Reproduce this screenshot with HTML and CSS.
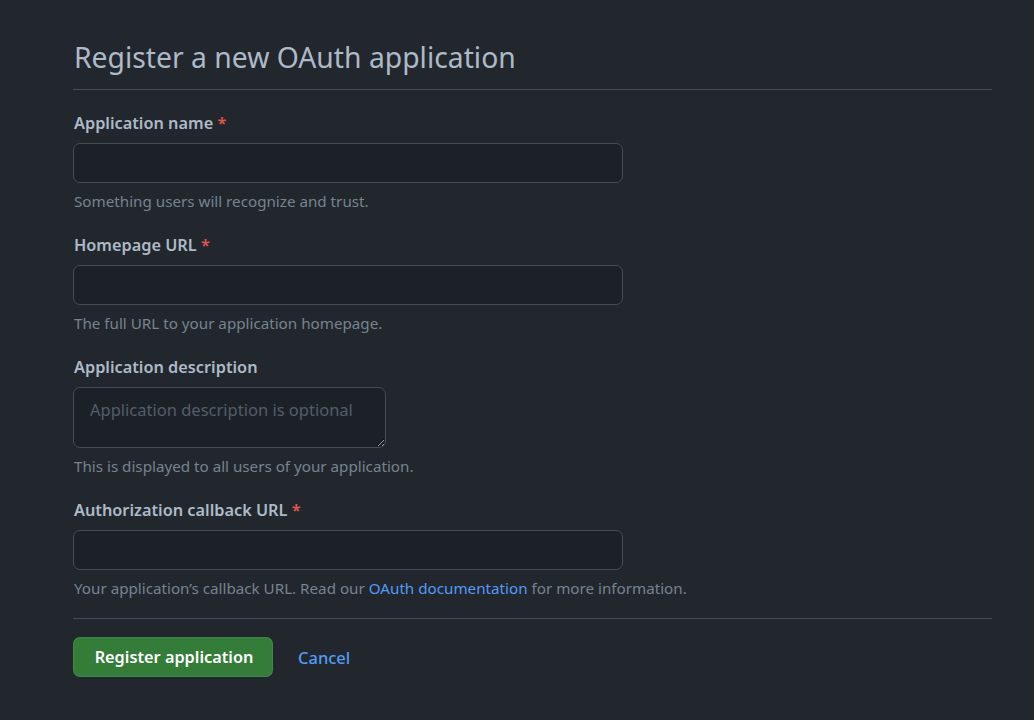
FILE: index.html
```html
<!DOCTYPE html>
<html lang="en">
<head>
<meta charset="utf-8">
<title>Register a new OAuth application</title>
<link rel="stylesheet" href="styles.css">
</head>
<body>
<main class="page">
  <div class="subhead">
    <h2 class="subhead-heading">Register a new OAuth application</h2>
  </div>
  <form class="form">
    <div class="form-group">
      <label class="label">Application name <span class="req">*</span></label>
      <input class="input" type="text">
      <p class="note">Something users will recognize and trust.</p>
    </div>
    <div class="form-group">
      <label class="label">Homepage URL <span class="req">*</span></label>
      <input class="input" type="text">
      <p class="note">The full URL to your application homepage.</p>
    </div>
    <div class="form-group">
      <label class="label">Application description</label>
      <textarea class="textarea" placeholder="Application description is optional"></textarea>
      <p class="note">This is displayed to all users of your application.</p>
    </div>
    <div class="form-group form-group-last">
      <label class="label">Authorization callback URL <span class="req">*</span></label>
      <input class="input" type="text">
      <p class="note">Your application’s callback URL. Read our <a class="link" href="#">OAuth documentation</a> for more information.</p>
    </div>
    <hr class="divider">
    <div class="actions">
      <button class="btn-primary" type="button">Register application</button>
      <a class="cancel" href="#">Cancel</a>
    </div>
  </form>
</main>
</body>
</html>
```

FILE: styles.css
```css
html, body {
  margin: 0;
  padding: 0;
  background: #22272e;
}
body {
  font-family: "Noto Sans", "Open Sans", sans-serif;
  color: #adbac7;
}
.page {
  width: 919px;
  padding: 0 0 0 73px;
}
.subhead {
  padding-top: 37px;
  padding-bottom: 12px;
  border-bottom: 1px solid #444c56;
}
.subhead-heading {
  margin: 0;
  font-size: 28.3px;
  font-weight: 400;
  line-height: 40px;
  color: #adbac7;
  padding-left: 1px;
}
.form {
  padding-top: 21px;
}
.form-group {
  margin-bottom: 22px;
}
.form-group-last {
  margin-bottom: 20px;
}
.label {
  display: block;
  font-size: 16.3px;
  font-weight: 600;
  line-height: 24px;
  margin-bottom: 8px;
  color: #adbac7;
  padding-left: 1px;
}
.req {
  color: #e5534b;
}
.input, .textarea {
  display: block;
  box-sizing: border-box;
  width: 550px;
  height: 40px;
  background: #1c2128;
  border: 1px solid #444c56;
  border-radius: 7px;
  color: #adbac7;
  font-family: inherit;
  font-size: 16.5px;
  padding: 6px 15px;
  margin: 0;
}
.textarea {
  width: 313px;
  height: 61px;
  resize: vertical;
  padding: 10px 16px 8px;
  line-height: 24px;
}
.textarea::placeholder {
  color: #545d68;
}
.note {
  margin: 8px 0 0;
  font-size: 15.2px;
  line-height: 20px;
  color: #768390;
  padding-left: 1px;
}
.link {
  color: #539bf5;
  text-decoration: none;
}
.divider {
  margin: 0;
  border: 0;
  border-top: 1px solid #444c56;
}
.actions {
  display: flex;
  align-items: center;
  gap: 25px;
  padding-top: 18px;
}
.btn-primary {
  box-sizing: border-box;
  height: 40px;
  width: 200px;
  background: #347d39;
  border: 1px solid rgba(205, 217, 229, 0.1);
  border-radius: 7px;
  color: #ffffff;
  font-family: inherit;
  font-size: 16.3px;
  font-weight: 600;
  padding: 0 0 0 2px;
  white-space: nowrap;
}
.cancel {
  color: #539bf5;
  text-decoration: none;
  font-size: 16.5px;
  font-weight: 500;
}
```
